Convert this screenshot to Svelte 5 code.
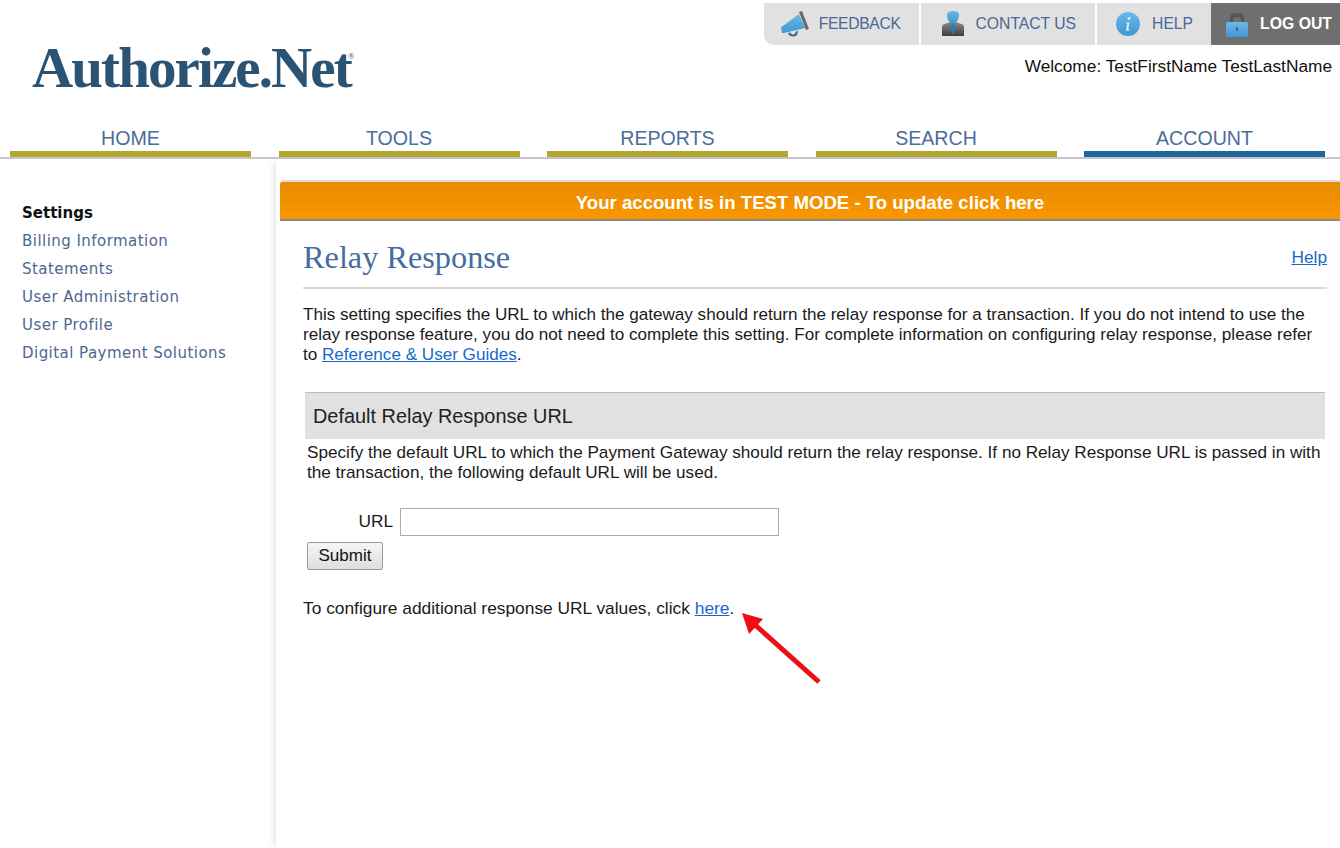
<script lang="ts">
  const tabs = ['HOME', 'TOOLS', 'REPORTS', 'SEARCH', 'ACCOUNT'];
  const sideLinks = [
    'Billing Information',
    'Statements',
    'User Administration',
    'User Profile',
    'Digital Payment Solutions',
  ];
</script>

<div class="page">
  <header class="header">
    <div class="logo">Authorize.Net<sup>®</sup></div>
    <div class="header-right">
      <div class="util">
        <a class="util-item feedback" href="#feedback">
          <svg width="28" height="26" viewBox="0 0 28 26">
            <defs>
              <linearGradient id="blue" x1="0" y1="0" x2="0" y2="1">
                <stop offset="0" stop-color="#6db8e8" />
                <stop offset="1" stop-color="#3f97d6" />
              </linearGradient>
              <linearGradient id="suit" x1="0" y1="0" x2="0" y2="1">
                <stop offset="0" stop-color="#8a8a8a" />
                <stop offset="1" stop-color="#3d3d3d" />
              </linearGradient>
            </defs>
            <path d="M0 16 L2 15 L18 3 L24 17 L3 22 L1 22 Z" fill="url(#blue)" />
            <path d="M18 1 L21 0 L28 18 L25 19 Z" fill="#6a6a6a" />
            <path d="M7 22 Q8 26 13 25.500 Q17 25 17 20 L15 20.500 Q14 23.500 12 23.500 Q10 23.500 9.500 21.500 Z" fill="#3f6f8f" />
          </svg>
          FEEDBACK
        </a>
        <a class="util-item contact" href="#contact">
          <svg width="22" height="26" viewBox="0 0 22 26">
            <path d="M0 25 V16 Q0 13 4 12.500 L8 11 H14 L18 12.500 Q22 13 22 16 V25 Z" fill="url(#suit)" />
            <path d="M5 4 Q5 0 11 0 Q17 0 17 4 Q17 11 11 12 Q5 11 5 4 Z" fill="url(#blue)" />
            <path d="M10 12 H12 L13 19 L11 24 L9 19 Z" fill="#1f7fc2" />
          </svg>
          CONTACT US
        </a>
        <a class="util-item help" href="#help">
          <svg width="24" height="24" viewBox="0 0 24 24">
            <circle cx="12" cy="12" r="12" fill="url(#blue)" />
            <circle cx="13" cy="6.500" r="1.500" fill="#d8ecf8" />
            <path d="M10.500 10.500 H13.500 L12.300 17.500 H13.500 L13.200 18.800 H10 L11.200 11.800 H10.300 Z" fill="#d8ecf8" />
          </svg>
          HELP
        </a>
        <a class="util-item logout" href="#logout">
          <svg width="22" height="25" viewBox="0 0 22 25">
            <path d="M4 11 V6 Q4 1 11 1 Q18 1 18 6 V11 H15 V7 Q15 5 11 5 Q7 5 7 7 V11 Z" fill="#555" />
            <rect x="0" y="10" width="22" height="15" rx="2" fill="url(#blue)" />
            <rect x="10" y="15" width="2" height="4" fill="#2c6f9e" />
          </svg>
          LOG OUT
        </a>
      </div>
      <div class="welcome">Welcome: TestFirstName TestLastName</div>
    </div>
  </header>

  <nav class="nav">
    {#each tabs as tab}
      <a class="tab" class:active={tab === 'ACCOUNT'} href={`#${tab}`}>{tab}</a>
    {/each}
  </nav>

  <div class="body">
    <aside class="side">
      <div class="side-title">Settings</div>
      {#each sideLinks as link}
        <a class="side-link" href="#side">{link}</a>
      {/each}
    </aside>

    <main class="main">
      <a class="banner" href="#test">Your account is in TEST MODE - To update click here</a>

      <div class="title-row">
        <h1>Relay Response</h1>
        <a class="link" href="#help">Help</a>
      </div>

      <p class="intro">
        This setting specifies the URL to which the gateway should return the relay response for a transaction. If you do not intend to use the relay response feature, you do not need to complete this setting. For complete information on configuring relay response, please refer to <a class="link" href="#guides">Reference &amp; User Guides</a>.
      </p>

      <section class="panel">
        <h2>Default Relay Response URL</h2>
        <p>
          Specify the default URL to which the Payment Gateway should return the relay response. If no Relay Response URL is passed in with the transaction, the following default URL will be used.
        </p>
        <div class="field">
          <label for="url">URL</label>
          <input id="url" type="text" />
        </div>
        <button type="button">Submit</button>
      </section>

      <p class="more">
        To configure additional response URL values, click <a class="link" href="#here">here</a>.
      </p>

      <svg class="arrow" width="84" height="72" viewBox="0 0 84 72">
        <path d="M78 69 L12 10" stroke="#ee0e16" stroke-width="5" fill="none" />
        <path d="M1 0 L22 6 L8 21 Z" fill="#ee0e16" />
      </svg>
    </main>
  </div>
</div>

<style>
  :global(body) {
    margin: 0;
    background: #fff;
  }

  .page {
    width: 1340px;
    height: 848px;
    overflow: hidden;
    font-family: 'Liberation Sans', Arial, sans-serif;
    color: #1a1a1a;
  }

  .header {
    display: flex;
    justify-content: space-between;
    height: 122px;
  }

  .logo {
    padding: 37px 0 0 32px;
    font-family: 'Liberation Serif', serif;
    font-weight: 700;
    font-size: 57px;
    line-height: 62px;
    letter-spacing: -1.9px;
    color: #2a5374;
    white-space: nowrap;
  }

  .logo sup {
    font-size: 9px;
    font-weight: 400;
    letter-spacing: 0;
    vertical-align: 28px;
    line-height: 0;
    margin-left: -3px;
  }

  .header-right {
    display: flex;
    flex-direction: column;
    align-items: flex-end;
    padding-top: 3px;
  }

  .util {
    display: flex;
    height: 42px;
    gap: 2px;
  }

  .util-item {
    display: flex;
    align-items: center;
    height: 100%;
    background: #e1e1e1;
    color: #4a6797;
    font-size: 15.700px;
    text-decoration: none;
    box-sizing: border-box;
  }

  .feedback {
    gap: 10px;
    padding: 0 18px 0 17px;
    letter-spacing: -0.35px;
    border-bottom-left-radius: 10px;
  }

  .contact {
    gap: 12px;
    padding: 0 19px 0 21px;
  }

  .help {
    gap: 12px;
    padding: 0 18px 0 19px;
  }

  .logout {
    margin-left: -2px;
    background: #6f6f6f;
    color: #fff;
    font-size: 15.800px;
    font-weight: 700;
    padding: 0 8px 0 15px;
    gap: 12px;
  }

  .welcome {
    margin-top: 11px;
    padding-right: 8px;
    font-size: 17.300px;
    line-height: 20px;
    color: #111;
  }

  .nav {
    display: grid;
    grid-template-columns: repeat(5, 241px);
    justify-content: space-between;
    padding: 0 15px 0 10px;
    border-bottom: 2px solid #c9c5d2;
    box-sizing: border-box;
    height: 37px;
  }

  .tab {
    height: 35px;
    box-sizing: border-box;
    border-bottom: 6px solid #b5a72d;
    text-align: center;
    font-size: 19.600px;
    line-height: 33px;
    color: #4a6d9c;
    text-decoration: none;
  }

  .tab.active {
    border-bottom-color: #1f6798;
  }

  .body {
    display: flex;
  }

  .side {
    width: 276px;
    flex: none;
    box-sizing: border-box;
    padding: 40px 0 0 22px;
    font-family: 'DejaVu Sans', Verdana, sans-serif;
    font-size: 15px;
    line-height: 28px;
  }

  .side-title {
    font-weight: 700;
    color: #111;
  }

  .side-link {
    display: block;
    color: #4f6690;
    letter-spacing: 0.46px;
    text-decoration: none;
  }

  .main {
    position: relative;
    flex: 1;
    min-height: 690px;
    padding: 21px 0 0 4px;
    box-sizing: border-box;
    box-shadow: -5px 0 6px -3px rgba(0, 0, 0, 0.12);
  }

  .banner {
    display: block;
    height: 41px;
    box-sizing: border-box;
    border-top: 2px solid #ddd;
    border-bottom: 2px solid #888;
    border-top-left-radius: 4px;
    background: linear-gradient(#e88a00, #fb9700);
    color: #fff;
    font-size: 18.600px;
    font-weight: 700;
    line-height: 42px;
    text-align: center;
    text-decoration: none;
    overflow: hidden;
  }

  .title-row {
    display: flex;
    justify-content: space-between;
    align-items: center;
    margin: 0 13px 0 23px;
    padding-top: 7px;
    height: 59px;
    border-bottom: 2px solid #d8d8d8;
    font-size: 17.300px;
  }

  h1 {
    margin: 0;
    font-family: 'Liberation Serif', serif;
    font-weight: 400;
    font-size: 32.300px;
    color: #456d9f;
  }

  .link {
    color: #1a68c8;
    text-decoration: underline;
  }

  .intro {
    margin: 16px 20px 0 23px;
    font-size: 17.100px;
    line-height: 20px;
  }

  .panel {
    margin: 27px 15px 0 25px;
  }

  h2 {
    margin: 0;
    height: 47px;
    box-sizing: border-box;
    padding-left: 8px;
    background: #e1e1e1;
    border-top: 1px solid #bbb;
    font-size: 19.900px;
    font-weight: 400;
    line-height: 47px;
    color: #222;
  }

  .panel p {
    margin: 3px -8px 0 2px;
    font-size: 17.150px;
    line-height: 20px;
  }

  .field {
    display: flex;
    align-items: center;
    justify-content: flex-start;
    margin-top: 26px;
  }

  label {
    width: 95px;
    padding: 0 7px 2px 0;
    box-sizing: border-box;
    text-align: right;
    font-size: 17.300px;
  }

  input {
    width: 379px;
    height: 28px;
    box-sizing: border-box;
    border: 1px solid #aaa;
    background: #fff;
    padding: 0;
  }

  button {
    display: block;
    margin: 6px 0 0 2px;
    width: 76px;
    height: 28px;
    padding: 0;
    border: 1px solid #999;
    border-radius: 2px;
    background: linear-gradient(#f6f6f6, #dedede);
    font-family: inherit;
    font-size: 17px;
    color: #111;
  }

  .more {
    margin: 28px 0 0 23px;
    font-size: 17.350px;
    line-height: 20px;
  }

  .arrow {
    position: absolute;
    left: 465px;
    top: 454px;
  }
</style>
